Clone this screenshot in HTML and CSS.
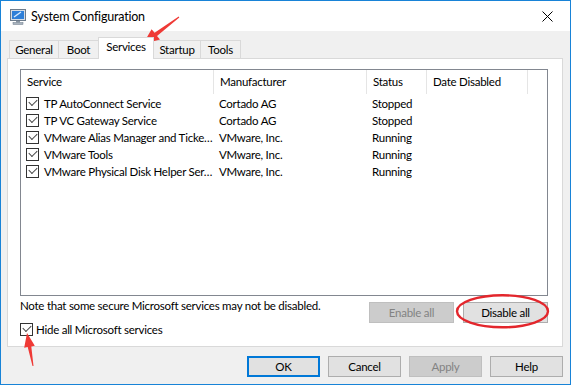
FILE: index.html
```html
<!DOCTYPE html>
<html lang="en">

<head>
    <meta charset="UTF-8">
    <meta name="viewport" content="width=device-width, initial-scale=1.0">
    <title>System Configuration</title>
    <link rel="stylesheet" href="styles.css">
</head>

<body>
    <div class="window">
        <div class="titlebar">
            <svg class="app-icon" width="16" height="16" viewBox="0 0 16 16">
                <rect x="0.5" y="0.5" width="15" height="11" fill="#d6dde5" stroke="#6d7c8c"/>
                <rect x="2" y="2" width="12" height="8" fill="#2e7fd8"/>
                <path d="M4 8 L11 3" stroke="#d8ecff" stroke-width="1.4"/>
                <rect x="6" y="12" width="4" height="1.5" fill="#8a96a3"/>
                <rect x="3" y="13.5" width="10" height="2" fill="#aab4be" stroke="#6d7c8c" stroke-width="0.5"/>
            </svg>
            <span class="title">System Configuration</span>
            <div class="close">
                <svg width="11" height="11" viewBox="0 0 11 11">
                    <path d="M0.5 0.5 L10.5 10.5 M10.5 0.5 L0.5 10.5" stroke="#000" stroke-width="1"/>
                </svg>
            </div>
        </div>

        <div class="client">
            <div class="tabs">
                <div class="tab tab-general">General</div>
                <div class="tab tab-boot">Boot</div>
                <div class="tab tab-services selected">Services</div>
                <div class="tab tab-startup">Startup</div>
                <div class="tab tab-tools">Tools</div>
            </div>

            <div class="panel">
                <div class="listview">
                    <div class="lv-header">
                        <div class="lv-col">Service</div>
                        <div class="lv-col">Manufacturer</div>
                        <div class="lv-col">Status</div>
                        <div class="lv-col">Date Disabled</div>
                        <div></div>
                    </div>
                    <div class="lv-row">
                        <div class="lv-cell name"><span class="check"></span>TP AutoConnect Service</div>
                        <div class="lv-cell">Cortado AG</div>
                        <div class="lv-cell">Stopped</div>
                        <div class="lv-cell"></div>
                    </div>
                    <div class="lv-row">
                        <div class="lv-cell name"><span class="check"></span>TP VC Gateway Service</div>
                        <div class="lv-cell">Cortado AG</div>
                        <div class="lv-cell">Stopped</div>
                        <div class="lv-cell"></div>
                    </div>
                    <div class="lv-row">
                        <div class="lv-cell name"><span class="check"></span>VMware Alias Manager and Ticke…</div>
                        <div class="lv-cell">VMware, Inc.</div>
                        <div class="lv-cell">Running</div>
                        <div class="lv-cell"></div>
                    </div>
                    <div class="lv-row">
                        <div class="lv-cell name"><span class="check"></span>VMware Tools</div>
                        <div class="lv-cell">VMware, Inc.</div>
                        <div class="lv-cell">Running</div>
                        <div class="lv-cell"></div>
                    </div>
                    <div class="lv-row">
                        <div class="lv-cell name"><span class="check"></span>VMware Physical Disk Helper Ser…</div>
                        <div class="lv-cell">VMware, Inc.</div>
                        <div class="lv-cell">Running</div>
                        <div class="lv-cell"></div>
                    </div>
                </div>

                <div class="note-row">
                    <span class="note">Note that some secure Microsoft services may not be disabled.</span>
                    <div class="note-buttons">
                        <button class="btn" disabled>Enable all</button>
                        <button class="btn">Disable all</button>
                    </div>
                </div>

                <div class="hide-row">
                    <span class="check"></span>Hide all Microsoft services
                </div>
            </div>

            <div class="dialog-buttons">
                <button class="btn default">OK</button>
                <button class="btn">Cancel</button>
                <button class="btn" disabled>Apply</button>
                <button class="btn">Help</button>
            </div>
        </div>

        <!-- markup drawn over the screenshot -->
        <svg class="annotations" width="571" height="385" viewBox="0 0 571 385">
            <polygon fill="#ef3a36" points="178.7,16.6 154.6,32.8 151.6,29.2 143,44 160,39.6 157,36 179.3,17.4"/>
            <polygon fill="#ef3a36" points="32.5,366.1 27.7,347.1 24.2,347.8 27,333 34.8,345.8 31.3,346.5 33.5,365.9"/>
            <ellipse cx="502.5" cy="311.3" rx="45.5" ry="16" fill="none" stroke="#e3262c" stroke-width="2.4"/>
        </svg>
    </div>
</body>

</html>
```

FILE: styles.css
```css
* {
    box-sizing: border-box;
}

body {
    margin: 0;
    font-family: Lato, "Noto Sans", sans-serif;
    font-size: 11.5px;
    letter-spacing: -0.25px;
    color: #000;
}

.window {
    position: relative;
    width: 571px;
    height: 385px;
    border: 1px solid #1883d7;
    background: #f0f0f0;
    display: flex;
    flex-direction: column;
}

.titlebar {
    height: 30px;
    background: white;
    display: flex;
    align-items: center;
    padding-left: 9px;
}

.app-icon {
    margin-right: 5px;
    margin-top: 1px;
}

.title {
    font-size: 12.5px;
    letter-spacing: -0.2px;
}

.close {
    margin-left: auto;
    width: 46px;
    height: 30px;
    display: flex;
    align-items: center;
    justify-content: center;
}

.client {
    flex: 1;
    padding: 7px 7px 0 6px;
}

/* tabs */
.tabs {
    display: flex;
    align-items: flex-end;
    height: 20px;
    padding-left: 2px;
}

.tab {
    height: 18px;
    line-height: 17px;
    border: 1px solid #d9d9d9;
    border-bottom: none;
    margin-left: -1px;
    background: #f0f0f0;
    text-align: center;
}

.tab:first-child {
    margin-left: 0;
}

.tab.selected {
    height: 22px;
    line-height: 18px;
    margin-bottom: -1px;
    background: white;
    position: relative;
    z-index: 1;
}

.tab-general { width: 50px; }
.tab-boot { width: 41px; }
.tab-services { width: 56px; }
.tab-startup { width: 48px; }
.tab-tools { width: 41px; }

.panel {
    height: 289px;
    background: white;
    border: 1px solid #d9d9d9;
    padding: 10px 0 0 12px;
}

/* service list */
.listview {
    width: 528px;
    height: 227px;
    border: 1px solid #828790;
}

.lv-header,
.lv-row {
    display: grid;
    grid-template-columns: 193px 153px 60px 101px 1fr;
}

.lv-header {
    height: 24px;
    margin-bottom: 1px;
}

.lv-col {
    border-right: 1px solid #e5e5e5;
    padding-left: 6px;
    line-height: 24px;
}

.lv-row {
    height: 17px;
    line-height: 17px;
}

.lv-cell {
    padding-left: 5px;
    white-space: nowrap;
    overflow: hidden;
}

.lv-cell.name {
    display: flex;
    align-items: center;
}

.check {
    position: relative;
    display: inline-block;
    width: 13px;
    height: 13px;
    border: 1px solid #333;
    background: white;
    margin-right: 5px;
    flex-shrink: 0;
}

.check::after {
    content: "";
    position: absolute;
    left: 2px;
    top: 1px;
    width: 7px;
    height: 4px;
    border-left: 1px solid #444;
    border-bottom: 1px solid #444;
    transform: rotate(-45deg);
}

.note-row {
    display: flex;
    margin-top: 2px;
    width: 528px;
}

.note {
    flex: 1;
    line-height: 16px;
    white-space: nowrap;
}

.note-buttons {
    display: flex;
    gap: 9px;
    margin-top: 4px;
}

.btn {
    font-family: inherit;
    font-size: 11.5px;
    letter-spacing: -0.25px;
    color: #000;
    height: 21px;
    padding: 0;
    background: #e1e1e1;
    border: 1px solid #adadad;
}

.note-buttons .btn {
    width: 85px;
}

.btn:disabled {
    background: #cccccc;
    border-color: #bfbfbf;
    color: #838383;
}

.btn.default {
    border: 2px solid #0078d7;
}

.hide-row {
    display: flex;
    align-items: center;
    height: 13px;
}

.hide-row .check {
    margin-right: 3px;
}

.dialog-buttons {
    display: flex;
    justify-content: flex-end;
    gap: 8px;
    margin-top: 9px;
}

.dialog-buttons .btn {
    width: 73px;
}

.annotations {
    position: absolute;
    left: -1px;
    top: -1px;
    pointer-events: none;
}
```
